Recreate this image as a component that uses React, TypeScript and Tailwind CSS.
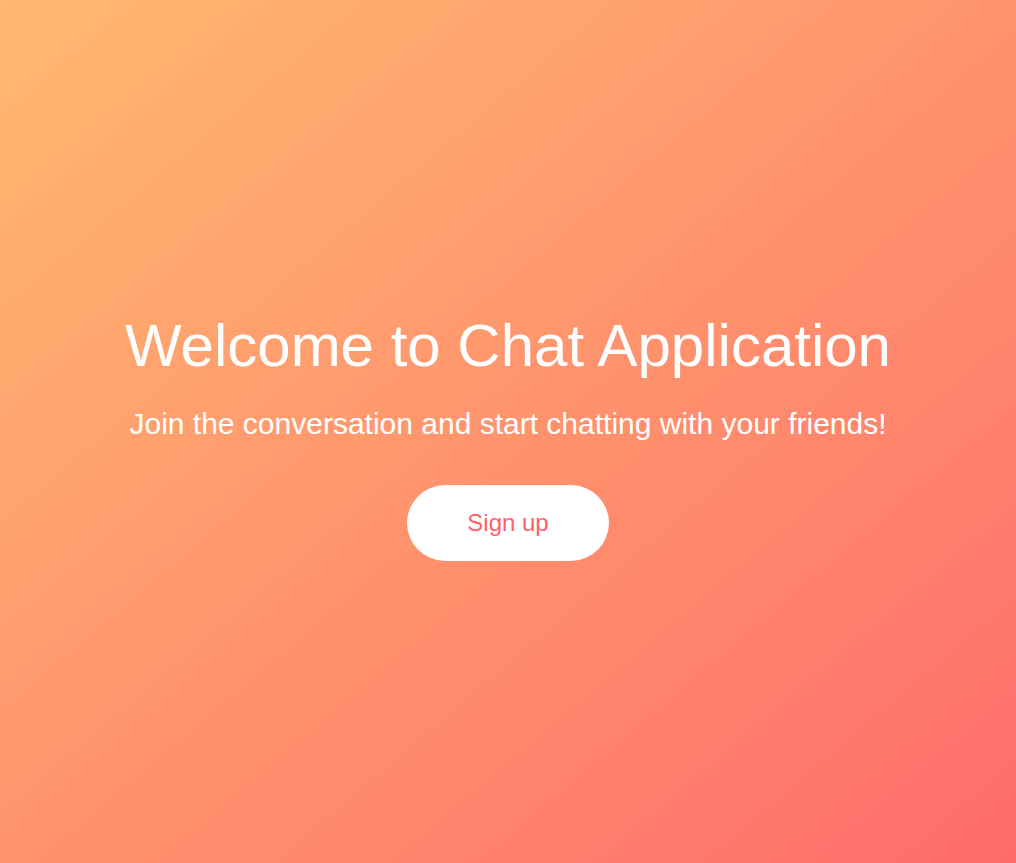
export default function App() {
  return (
    <div className="min-h-screen w-full bg-gradient-to-br from-[#ffb86f] to-[#ff6b6b] flex flex-col items-center justify-center pt-[8px] text-white font-['Liberation_Sans',Arial,sans-serif]">
      <h1 className="text-[60px] leading-[69px] font-normal">Welcome to Chat Application</h1>
      <p className="mt-[26px] text-[30px] leading-[35px]">Join the conversation and start chatting with your friends!</p>
      <button className="mt-[44px] w-[202px] h-[76px] rounded-full bg-white text-[#ff5f6d] text-[24px]">
        Sign up
      </button>
    </div>
  );
}
